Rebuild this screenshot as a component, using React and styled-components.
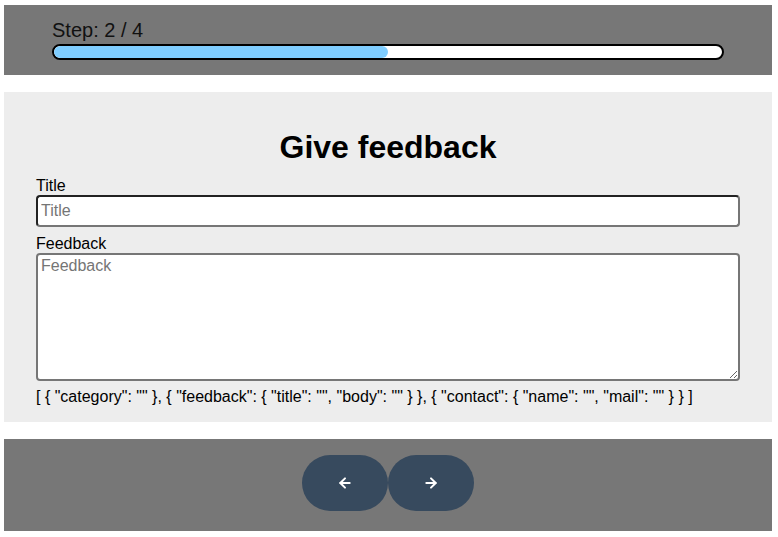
import React from 'react'
import styled, { createGlobalStyle } from 'styled-components'
import { ArrowLeft, ArrowRight } from 'lucide-react'

const GlobalStyle = createGlobalStyle`
  body {
    margin: 0;
    font-family: "Liberation Sans", Arial, sans-serif;
    background: #ffffff;
  }
`

const Page = styled.div`
  display: flex;
  flex-direction: column;
  gap: 17px;
  padding: 5px 6px 6px 4px;
`

const TopBar = styled.div`
  background-color: #777777;
  height: 70px;
  box-sizing: border-box;
  padding: 14px 48px 0 48px;
`

const StepText = styled.div`
  font-size: 20px;
  line-height: 23px;
  color: #111111;
`

const Track = styled.div`
  margin-top: 2px;
  height: 16px;
  box-sizing: border-box;
  border: 2px solid #000000;
  border-radius: 8px;
  background: #ffffff;
  overflow: hidden;
`

const Fill = styled.div`
  height: 100%;
  background-color: #7fcdff;
  border-radius: 6px;
`

const FormSection = styled.div`
  background-color: #ededed;
  height: 330px;
  box-sizing: border-box;
  padding: 37px 32px 0 32px;
  display: flex;
  flex-direction: column;
`

const Heading = styled.h1`
  margin: 0 0 11px 0;
  text-align: center;
  font-size: 32px;
  line-height: 37px;
  font-weight: bold;
  color: #000000;
`

const Label = styled.label`
  font-size: 16px;
  line-height: 18px;
  color: #000000;
`

const Input = styled.input`
  box-sizing: border-box;
  width: 100%;
  height: 32px;
  margin: 0 0 8px 0;
  padding: 0 3px;
  border: 2px solid #767676;
  border-top-color: #222222;
  border-left-color: #222222;
  border-radius: 4px;
  font-family: "Liberation Sans", Arial, sans-serif;
  font-size: 16px;
  &::placeholder {
    color: #757575;
  }
`

const TextArea = styled.textarea`
  box-sizing: border-box;
  width: 100%;
  height: 128px;
  margin: 0;
  padding: 2px 3px;
  border: 2px solid #767676;
  border-radius: 4px;
  font-family: "Liberation Sans", Arial, sans-serif;
  font-size: 16px;
  display: block;
  &::placeholder {
    color: #757575;
  }
`

const JsonLine = styled.div`
  margin-top: 7px;
  font-size: 16px;
  line-height: 18px;
  color: #000000;
`

const BottomBar = styled.div`
  background-color: #777777;
  height: 92px;
  box-sizing: border-box;
  padding-top: 16px;
  display: flex;
  justify-content: center;
  align-items: flex-start;
`

const NavButton = styled.button`
  width: 86px;
  height: 56px;
  border: none;
  border-radius: 28px;
  background-color: #374a5e;
  color: #ffffff;
  display: flex;
  align-items: center;
  justify-content: center;
  padding: 0;
  cursor: pointer;
`

export default function App() {
  const step = 2
  const total = 4
  const json = '[ { "category": "" }, { "feedback": { "title": "", "body": "" } }, { "contact": { "name": "", "mail": "" } } ]'

  return (
    <>
      <GlobalStyle />
      <Page>
        <TopBar>
          <StepText>Step: {step} / {total}</StepText>
          <Track>
            <Fill style={{ width: `${(step / total) * 100}%` }} />
          </Track>
        </TopBar>
        <FormSection>
          <Heading>Give feedback</Heading>
          <Label>Title</Label>
          <Input placeholder="Title" />
          <Label>Feedback</Label>
          <TextArea placeholder="Feedback" />
          <JsonLine>{json}</JsonLine>
        </FormSection>
        <BottomBar>
          <NavButton><ArrowLeft size={16} strokeWidth={3} /></NavButton>
          <NavButton><ArrowRight size={16} strokeWidth={3} /></NavButton>
        </BottomBar>
      </Page>
    </>
  )
}
